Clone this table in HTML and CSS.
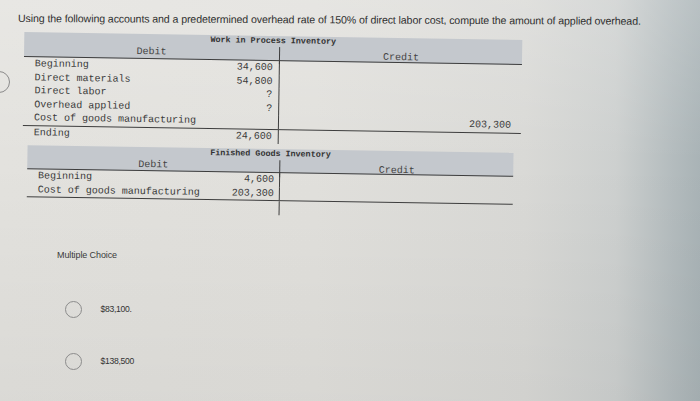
FILE: index.html
```html
<!DOCTYPE html>
<html>
<head>
<meta charset="utf-8">
<link rel="stylesheet" href="styles.css">
</head>
<body>
<div class="page">
  <p class="prompt">Using the following accounts and a predetermined overhead rate of 150% of direct labor cost, compute the amount of applied overhead.</p>
  <div class="tables">
    <div class="arc"></div>
    <div class="ledgers">
      <div class="ledger wip">
        <div class="bar">
          <div class="bar-title">Work in Process Inventory</div>
          <div class="bar-cols"><div class="hd">Debit</div><div class="hd credit">Credit</div></div>
        </div>
        <div class="row"><div class="dr"><span>Beginning</span><span>34,600</span></div><div class="cr"></div></div>
        <div class="row"><div class="dr"><span>Direct materials</span><span>54,800</span></div><div class="cr"></div></div>
        <div class="row"><div class="dr"><span>Direct labor</span><span>?</span></div><div class="cr"></div></div>
        <div class="row"><div class="dr"><span>Overhead applied</span><span>?</span></div><div class="cr"></div></div>
        <div class="row total"><div class="dr"><span>Cost of goods manufacturing</span><span></span></div><div class="cr">203,300</div></div>
        <div class="row"><div class="dr"><span>Ending</span><span>24,600</span></div><div class="cr"></div></div>
      </div>
      <div class="ledger fg">
        <div class="bar">
          <div class="bar-title">Finished Goods Inventory</div>
          <div class="bar-cols"><div class="hd">Debit</div><div class="hd credit">Credit</div></div>
        </div>
        <div class="row"><div class="dr"><span>Beginning</span><span>4,600</span></div><div class="cr"></div></div>
        <div class="row total"><div class="dr"><span>Cost of goods manufacturing</span><span>203,300</span></div><div class="cr"></div></div>
        <div class="row"><div class="dr"><span></span><span></span></div><div class="cr"></div></div>
      </div>
    </div>
  </div>
  <div class="mc">
    <div class="mc-label">Multiple Choice</div>
    <div class="option first"><span class="radio"></span><span class="opt-text">$83,100.</span></div>
    <div class="option"><span class="radio"></span><span class="opt-text">$138,500</span></div>
  </div>
</div>
</body>
</html>
```
FILE: styles.css
```css
html, body {
  margin: 0;
  padding: 0;
}
body {
  width: 700px;
  height: 401px;
  overflow: hidden;
  background:
    linear-gradient(to bottom, rgba(255,255,255,0.18) 0%, rgba(255,255,255,0) 40%, rgba(0,0,0,0.04) 100%),
    linear-gradient(to right, #e3e2de 0%, #e1e0dc 45%, #d9d9d6 75%, #cdd0cf 88%, #b4bcbe 96%, #a9b3b6 100%);
  font-family: "Liberation Sans", Arial, sans-serif;
  color: #333;
}
.page {
  padding-top: 12px;
}
.prompt {
  margin: 0 0 0 18px;
  font-size: 10.6px;
  line-height: 12px;
  color: #2f2f2f;
  letter-spacing: -0.1px;
  white-space: nowrap;
  transform: rotate(0.25deg);
  transform-origin: 0 50%;
}
.tables {
  display: flex;
  align-items: flex-start;
  margin-top: 11.5px;
}
.arc {
  width: 20px;
  height: 20px;
  margin-left: -12px;
  margin-top: 35px;
  border: 1px solid #8a8a8a;
  border-radius: 50%;
  flex: none;
}
.ledgers {
  margin-left: 13px;
  transform: rotate(0.9deg);
  transform-origin: 248px 85px;
  font-family: "Liberation Mono", "Courier New", monospace;
  font-size: 10px;
  color: #3a3a3a;
}
.ledger.wip {
  width: 498px;
}
.ledger.fg {
  width: 486px;
  margin-left: 5px;
  margin-top: 5.5px;
}
.bar {
  background: #c4c8cd;
  border-bottom: 1.5px solid #3d3d3d;
}
.bar-title {
  height: 11px;
  line-height: 11px;
  text-align: center;
  font-size: 8.4px;
  font-weight: bold;
  color: #333;
}
.bar-cols {
  display: grid;
  height: 13px;
}
.wip .bar-cols, .wip .row {
  grid-template-columns: 255px 1fr;
}
.fg .bar-cols, .fg .row {
  grid-template-columns: 252px 1fr;
}
.fg .bar-cols {
  height: 12px;
}
.hd {
  text-align: center;
  line-height: 13px;
  font-size: 10px;
  color: #444;
}
.hd.credit {
  border-left: 1.5px solid #3d3d3d;
  line-height: 17px;
}
.row {
  display: grid;
  height: 13.6px;
  line-height: 13.6px;
}
.row.total {
  border-bottom: 1.5px solid #3d3d3d;
}
.dr {
  display: flex;
  justify-content: space-between;
  padding-left: 11px;
  padding-right: 6px;
  white-space: nowrap;
}
.fg .dr {
  padding-right: 5px;
}
.cr {
  border-left: 1.5px solid #3d3d3d;
  text-align: right;
  padding-right: 10px;
}
.mc {
  margin-left: 57px;
  margin-top: 36px;
  font-family: "Liberation Sans", Arial, sans-serif;
  color: #3a3a3a;
}
.mc-label {
  font-size: 9px;
  line-height: 10px;
  letter-spacing: -0.1px;
}
.option {
  display: flex;
  align-items: center;
  margin-left: 7.5px;
  margin-top: 35px;
  height: 17px;
}
.option.first {
  margin-top: 40.5px;
}
.radio {
  width: 15px;
  height: 15px;
  border: 1.2px solid #8c8c8c;
  border-radius: 50%;
  flex: none;
}
.opt-text {
  margin-left: 19px;
  font-size: 8.6px;
  letter-spacing: -0.3px;
  color: #333;
}
```
